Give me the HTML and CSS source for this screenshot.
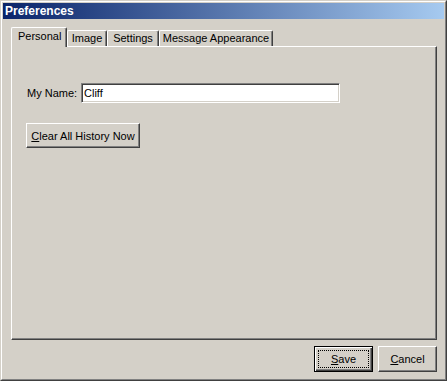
FILE: index.html
```html
<!DOCTYPE html>
<html>
<head>
<meta charset="utf-8">
<link rel="stylesheet" href="styles.css">
</head>
<body>
<div class="window">
  <div class="frame">
    <div class="titlebar"><span class="title">Preferences</span></div>
    <div class="client">
      <div class="tabs">
        <div class="tab tab-active tab-personal">Personal</div>
        <div class="tab tab-image">Image</div>
        <div class="tab tab-settings">Settings</div>
        <div class="tab tab-message">Message Appearance</div>
      </div>
      <div class="panel">
        <div class="name-row">
          <label class="label" for="name">My Name:</label>
          <input class="field" id="name" type="text" value="Cliff">
        </div>
        <div class="clear-row">
          <button class="btn btn-clear"><u>C</u>lear All History Now</button>
        </div>
      </div>
      <div class="actions">
        <button class="btn btn-default"><span class="focus"><u>S</u>ave</span></button>
        <button class="btn btn-action"><u>C</u>ancel</button>
      </div>
    </div>
  </div>
</div>
</body>
</html>
```

FILE: styles.css
```css
* { box-sizing: border-box; }

html, body {
  margin: 0;
  padding: 0;
  background: #d4d0c8;
}

body {
  font-family: "Liberation Sans", Arial, sans-serif;
  font-size: 11px;
  color: #000;
}

.window {
  width: 447px;
  height: 381px;
  border: 1px solid;
  border-color: #d4d0c8 #404040 #404040 #d4d0c8;
}

.frame {
  height: 100%;
  border: 1px solid;
  border-color: #fff #808080 #808080 #fff;
  padding: 1px;
  display: flex;
  flex-direction: column;
}

.titlebar {
  height: 16px;
  background: linear-gradient(to right, #0a246a, #a6caf0);
  display: flex;
  align-items: center;
  padding-left: 2px;
}

.title {
  color: #fff;
  font-weight: bold;
  font-size: 12px;
  line-height: 14px;
}

.client {
  padding: 8px 0 0 8px;
  display: flex;
  flex-direction: column;
}

.tabs {
  display: flex;
  align-items: flex-end;
  height: 19px;
  position: relative;
  z-index: 2;
}

.tab {
  height: 16px;
  border-top: 1px solid #fff;
  border-left: 1px solid #fff;
  border-right: 1px solid #404040;
  box-shadow: inset -1px 0 #808080;
  border-top-left-radius: 2px;
  border-top-right-radius: 2px;
  background: #d4d0c8;
  text-align: center;
  line-height: 14px;
  white-space: nowrap;
}

.tab-active {
  height: 20px;
  margin-bottom: -1px;
  line-height: 17px;
  text-align: left;
  padding-left: 6px;
}

.tab-personal { width: 56px; }
.tab-image { width: 40px; }
.tab-settings { width: 52px; }
.tab-message { width: 114px; }

.panel {
  width: 426px;
  height: 294px;
  border: 1px solid;
  border-color: #fff #404040 #404040 #fff;
  box-shadow: inset -1px -1px #808080;
  padding: 36px 0 0 15px;
  position: relative;
  z-index: 1;
}

.name-row {
  display: flex;
  align-items: center;
}

.label {
  width: 54px;
}

.field {
  width: 259px;
  height: 20px;
  margin: 0;
  padding: 0 2px;
  border: 1px solid;
  border-color: #808080 #fff #fff #808080;
  box-shadow: inset 1px 1px #404040, inset -1px -1px #d4d0c8;
  background: #fff;
  font-family: "Liberation Sans", Arial, sans-serif;
  font-size: 11px;
  color: #000;
  outline: none;
}

.clear-row {
  margin-top: 20px;
  margin-left: -1px;
}

.btn {
  font-family: "Liberation Sans", Arial, sans-serif;
  font-size: 11px;
  color: #000;
  background: #d4d0c8;
  border: 1px solid;
  border-color: #fff #404040 #404040 #fff;
  box-shadow: inset -1px -1px #808080;
  margin: 0;
  padding: 0;
  display: flex;
  align-items: center;
  justify-content: center;
}

.btn-clear {
  width: 114px;
  height: 25px;
}

.actions {
  display: flex;
  gap: 5px;
  margin-top: 6px;
  padding-left: 303px;
}

.btn-action {
  width: 59px;
  height: 26px;
}

.btn-default {
  width: 59px;
  height: 26px;
  border: 1px solid #000;
  box-shadow: inset 1px 1px #fff, inset -1px -1px #404040, inset -2px -2px #808080;
  padding: 3px;
}

.focus {
  flex: 1;
  align-self: stretch;
  display: flex;
  align-items: center;
  justify-content: center;
  border: 1px dotted #000;
}
```
